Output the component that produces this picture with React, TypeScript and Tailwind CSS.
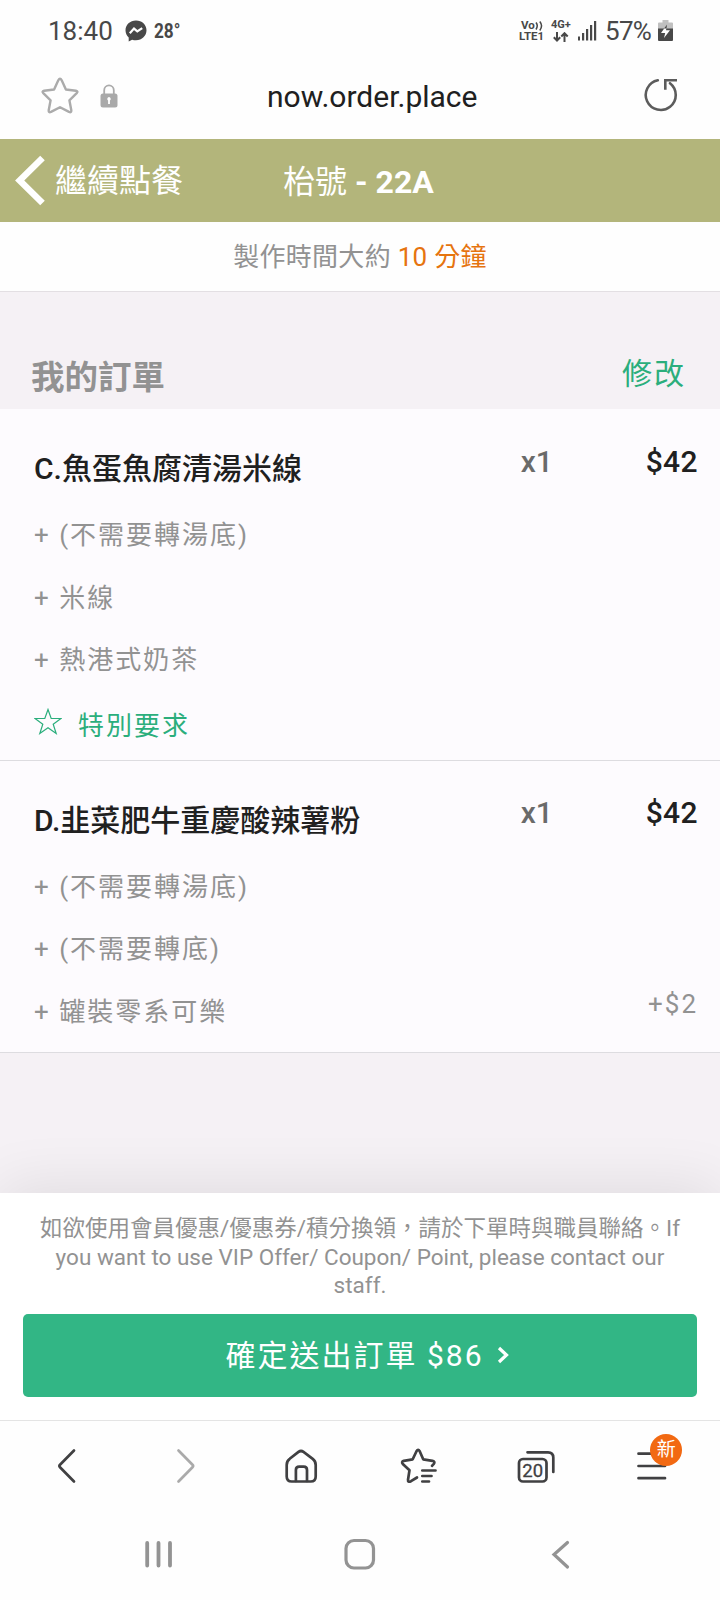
import React from 'react';

interface OrderOption {
  name: string;
  price?: string;
}

interface OrderItem {
  id: string;
  name: string;
  quantity: number;
  price: string;
  options: OrderOption[];
  specialRequest?: boolean;
}

const ORDER_ITEMS: OrderItem[] = [
  {
    id: 'c',
    name: 'C.魚蛋魚腐清湯米線',
    quantity: 1,
    price: '$42',
    options: [{ name: '(不需要轉湯底)' }, { name: '米線' }, { name: '熱港式奶茶' }],
    specialRequest: true
  },
  {
    id: 'd',
    name: 'D.韭菜肥牛重慶酸辣薯粉',
    quantity: 1,
    price: '$42',
    options: [{ name: '(不需要轉湯底)' }, { name: '(不需要轉底)' }, { name: '罐裝零系可樂', price: '+$2' }]
  }
];

const StatusBar = () => (
  <div className="flex h-[61px] items-center pl-[48px] pr-[47px] text-[#484848]">
    <span className="w-[77px] text-[26px] leading-none">18:40</span>
    <svg width="22" height="22" viewBox="0 0 22 22">
      <path d="M11 .5C5 .5.5 4.800.5 10.300c0 3 1.200 5.300 3.200 7.200V21.500l3.400-1.800c1.200.4 2.500.5 3.900.5 6 0 10.500-4.300 10.500-9.900S17 .5 11 .5z" fill="#484848" />
      <path d="M4.800 13.200 9 8.600l3.300 2.800 4.900-3.300" fill="none" stroke="#fff" strokeWidth="2.200" />
    </svg>
    <span className="ml-[7px] origin-left scale-x-[.86] text-[20px] font-bold leading-none">28°</span>

    <div className="ml-auto flex items-center">
      <div className="flex w-[32px] flex-col items-start text-[11.5px] font-bold leading-[11px]">
        <span className="flex pl-[2px]">
          Vo
          <svg className="mt-px" width="9" height="10" viewBox="0 0 9 10" fill="none" stroke="#484848" strokeWidth="1.500">
            <path d="M1 1.500q2.500 3.200 0 7M4.800.5q3.500 4.200 0 9" />
          </svg>
        </span>
        <span>LTE1</span>
      </div>
      <div className="flex w-[26px] flex-col text-[11px] font-bold leading-[11px]">
        <span>4G+</span>
        <svg className="ml-[2px] mt-[2px]" width="16" height="10" viewBox="0 0 16 10" fill="none" stroke="#484848" strokeWidth="2">
          <path d="M4 0v8.500M.8 5.200 4 8.500l3.200-3.300M11.500 10V1.200M8.300 4.500l3.200-3.300 3.200 3.300" />
        </svg>
      </div>
      <svg width="20" height="20" viewBox="0 0 20 20" fill="#484848">
        <rect x="1" y="15.500" width="2" height="4" />
        <rect x="5" y="12" width="2.200" height="7.500" />
        <rect x="9" y="8" width="2.200" height="11.500" />
        <rect x="13" y="4" width="2.200" height="15.500" />
        <rect x="17" y="0" width="2.200" height="19.500" />
      </svg>
      <span className="ml-[8px] w-[53px] text-[26px] leading-none tracking-[-0.7px]">57%</span>
      <svg width="15" height="21" viewBox="0 0 15 21">
        <path d="M4.500 0h6v2.500H14q1 0 1 1V9H0V3.500q0-1 1-1h3.500z" fill="#c0c0c0" />
        <path d="M0 8.500h15V20q0 1-1 1H1q-1 0-1-1z" fill="#484848" />
        <path d="M9 4.500 3 13h4.200L6 18l6-7.800H8z" fill="#fff" />
        <path d="M9 4.500 6 8.600h2.600z" fill="#484848" />
      </svg>
    </div>
  </div>
);

const AddressBar = () => (
  <div className="flex h-[78px] items-center px-[41px] pb-[9px]">
    <svg width="38" height="38" viewBox="0 0 38 38" fill="none" stroke="#ababab" strokeWidth="2.400" strokeLinejoin="round">
      <path d="M17.300 3.300q1.700-3 3.400 0l4.200 9.200 10 1.200q2.600.6.800 2.500l-7.300 7.100 1.900 10q.2 2.700-2.300 1.600L19 30.200l-9 4.700q-2.500 1.100-2.300-1.600l1.900-10-7.300-7.100q-1.800-1.900.8-2.500l10-1.200z" />
    </svg>
    <svg className="ml-[21px] mt-px" width="18" height="24" viewBox="0 0 18 24">
      <path d="M4.200 10V6.200a4.600 4.600 0 0 1 9.600 0V10" fill="none" stroke="#ababab" strokeWidth="1.800" />
      <rect x=".5" y="9.500" width="17" height="14" rx="2.500" fill="#a9a9a9" />
      <path d="M9 13a2 2 0 0 1 .9 3.600V20H8.100v-3.400A2 2 0 0 1 9 13z" fill="#fff" />
    </svg>
    <span className="ml-[149px] mt-[3px] text-[30px] leading-none text-[#202020]">now.order.place</span>
    <svg className="ml-auto mt-[-2px]" width="36" height="36" viewBox="0 0 36 36" fill="none" stroke="#5c5c5c" strokeWidth="2.600">
      <path d="M14.800 3.300A15 15 0 1 0 27 6.200" strokeLinecap="round" />
      <path d="M22.300 12.800V3.300H34" />
    </svg>
  </div>
);

const PageHeader = () => (
  <div className="flex h-[83px] items-center bg-[#b3b57b] text-[32px] text-white">
    <svg className="ml-[15px]" width="31" height="51" viewBox="0 0 31 51" fill="none" stroke="#fff" strokeWidth="6.500">
      <path d="M27.500 3 4.700 25.500 27.500 48" />
    </svg>
    <span className="ml-[9px] w-[228px] leading-none">繼續點餐</span>
    <span className="mt-[3px] font-bold leading-none">
      <span className="font-normal">枱號</span> - 22A
    </span>
  </div>
);

const OrderCard = ({ item }: { item: OrderItem }) => (
  <div className="border-b border-[#dddce0] bg-[#fdfbfe] pl-[34px] pr-[22px] pt-[25px]">
    <div className="flex h-[70px] items-center text-[30px] font-medium leading-none text-[#202020]">
      <span className="flex-1">{item.name}</span>
      <span className="w-[125px] pb-[15px] text-[#6a6a6a]">x{item.quantity}</span>
      <span className="pb-[15px] tracking-[0.4px]">{item.price}</span>
    </div>
    {item.options.map((option, index) => (
      <div key={index} className="flex h-[62.5px] items-center justify-between text-[26px] leading-none tracking-[2px] text-[#929292]">
        <span>+ {option.name}</span>
        {option.price && <span className="pb-[15px]">{option.price}</span>}
      </div>
    ))}
    {item.specialRequest ? (
      <div className="flex h-[68px] items-center text-[26px] leading-none tracking-[2px] text-[#2bae7c]">
        <svg className="mb-[9px]" width="28" height="27" viewBox="0 0 28 27" fill="none" stroke="#2bae7c" strokeWidth="1.200">
          <path d="M14 1.500 17.200 10.500H27L19.200 16.200 22.200 25.500 14 19.800 5.800 25.500 8.800 16.200 1 10.500H10.800Z" />
        </svg>
        <span className="ml-[16px]">特別要求</span>
      </div>
    ) : (
      <div className="h-[9px]" />
    )}
  </div>
);

const ConfirmFooter = () => (
  <div className="relative h-[227px] bg-white px-[23px] pt-[21px] shadow-[0_-6px_56px_rgba(0,0,0,0.09)]">
    <p className="text-center text-[22.5px] leading-[28.5px] text-[#929292]">
      如欲使用會員優惠/優惠券/積分換領，請於下單時與職員聯絡。If
      <br />
      you want to use VIP Offer/ Coupon/ Point, please contact our
      <br />
      staff.
    </p>
    <button className="mt-[14px] flex h-[83px] w-full items-center justify-center rounded-[5px] bg-[#32b685] pl-[15px] text-[30px] tracking-[2px] text-white">
      確定送出訂單 $86
      <svg className="ml-[13px]" width="13" height="18" viewBox="0 0 13 18" fill="none" stroke="#fff" strokeWidth="3.200">
        <path d="M2 2 9.500 9 2 16" />
      </svg>
    </button>
  </div>
);

const ToolbarIcon = ({ children, color = '#404042' }: { children: React.ReactNode; color?: string }) => (
  <svg
    width="48"
    height="48"
    viewBox="0 0 48 48"
    fill="none"
    stroke={color}
    strokeWidth="2.700"
    strokeLinecap="round"
    strokeLinejoin="round"
  >
    {children}
  </svg>
);

const BrowserToolbar = () => (
  <div className="relative grid h-[90px] grid-cols-6 place-items-center border-t border-[#e4e4e4] bg-[#fefefe] px-2">
    <ToolbarIcon>
      <path d="M31 8.500 17 22.800q-1.200 1.200 0 2.400L31 39.500" />
    </ToolbarIcon>
    <ToolbarIcon color="#aaaaaa">
      <path d="M18.500 8.500 32.500 22.800q1.200 1.200 0 2.400L18.500 39.500" />
    </ToolbarIcon>
    <ToolbarIcon>
      <path d="M9.700 23q0-4 3-6.200L21.500 9.900q2.500-1.800 5 0L35.700 16.800q3 2.200 3 6.200V34.500q0 5-5 5H14.700q-5 0-5-5z" />
      <path d="M18.900 39V28q0-3.300 3.300-3.300h4.500q3.300 0 3.300 3.300V39" />
    </ToolbarIcon>
    <ToolbarIcon>
      <path d="M22 35.500 16 39.200q-3.300 1.500-3-1.500L14.500 28.300 7.800 22q-1.800-2.300 1-3.200L17.700 17.300 21.500 9.200q1.600-2.700 3.200 0L28.200 17.300 37.500 18.800q3 .8 1.300 3L37 23.800" />
      <path d="M27.300 28.500H40.500M27.300 34H36.500M27.300 39.500H34" />
    </ToolbarIcon>
    <ToolbarIcon>
      <rect x="7" y="17" width="27.500" height="22.500" rx="4" />
      <path d="M15.500 10.300H36q5.300 0 5.300 5.300V30" />
      <text x="20.700" y="34.600" textAnchor="middle" fontSize="18.500" fill="#404042" stroke="#404042" strokeWidth=".3">
        20
      </text>
    </ToolbarIcon>
    <div className="relative">
      <ToolbarIcon>
        <path d="M9.500 11.700H36M9.500 24H36M9.500 36.200H36" />
      </ToolbarIcon>
      <span className="absolute left-[21px] top-[-8px] flex h-8 w-8 items-center justify-center rounded-full bg-[#f26912] text-[19px] leading-none text-white">
        新
      </span>
    </div>
  </div>
);

const SystemNav = () => (
  <div className="relative grid h-[90px] grid-cols-3 place-items-center bg-[#fefefe] px-[58px]">
    <svg width="32" height="32" viewBox="0 0 32 32" fill="none" stroke="#939393" strokeWidth="3.800" strokeLinecap="round">
      <path d="M4.200 4V26.500M15.500 4V26.500M27 4V26.500" />
    </svg>
    <svg width="34" height="34" viewBox="0 0 34 34" fill="none" stroke="#939393" strokeWidth="3.200">
      <rect x="3" y="2.500" width="27.500" height="27.500" rx="8" />
    </svg>
    <svg width="32" height="32" viewBox="0 0 32 32" fill="none" stroke="#939393" strokeWidth="3.200" strokeLinecap="round">
      <path d="M22.500 3.500 9 15.500 22.500 28" />
    </svg>
  </div>
);

export default function App() {
  return (
    <div className="flex h-[1600px] w-[720px] flex-col overflow-hidden bg-[#fefefe] font-[Roboto,'Noto_Sans_CJK_TC',sans-serif]">
      <StatusBar />
      <AddressBar />
      <PageHeader />

      {/* Estimated waiting time */}
      <div className="flex h-[70px] items-center justify-center border-b border-[#e3dfe3] text-[26px] leading-none tracking-[0.3px] text-[#929292]">
        製作時間大約&nbsp;<span className="text-[#e6740f]">10 分鐘</span>
      </div>

      {/* Order list */}
      <div className="flex-1 bg-[#f5f1f5]">
        <div className="flex h-[117px] justify-between pl-[31px] pr-[34px] pt-[57px]">
          <h2 className="pt-[3px] text-[33.5px] font-bold leading-[52px] text-[#929292]">我的訂單</h2>
          <span className="text-[30px] leading-[50px] tracking-[2px] text-[#2bae7c]">修改</span>
        </div>
        {ORDER_ITEMS.map((item) => (
          <OrderCard key={item.id} item={item} />
        ))}
      </div>

      <ConfirmFooter />
      <BrowserToolbar />
      <SystemNav />
    </div>
  );
}
